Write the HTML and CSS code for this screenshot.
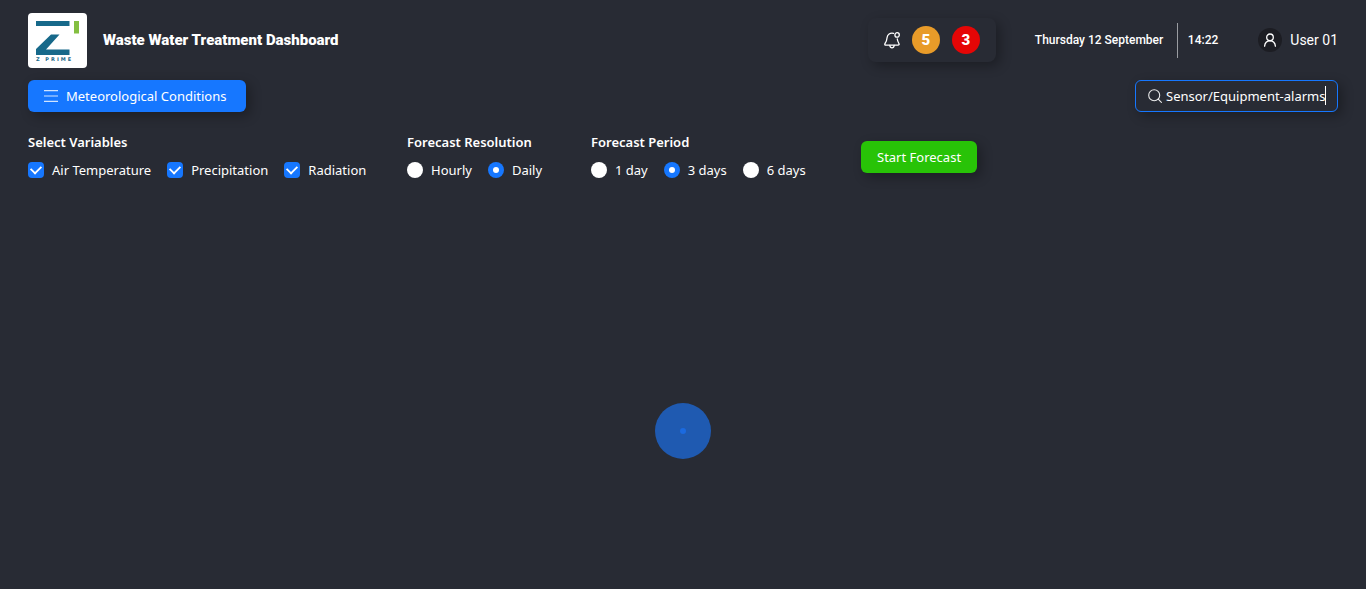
FILE: index.html
```html
<!DOCTYPE html>
<html lang="en">
<head>
<meta charset="utf-8">
<meta name="viewport" content="width=device-width, initial-scale=1">
<title>Waste Water Treatment Dashboard</title>
<link rel="stylesheet" href="styles.css">
</head>
<body>
<div class="page">
  <header class="header">
    <div class="brand">
      <div class="logo">
        <svg class="logo-mark" viewBox="0 0 44 34" aria-hidden="true">
          <path fill="#17698a" d="M0 0H33.500V5H0Z"/>
          <path fill="#17698a" d="M15 13.500H23.500L10 28.500H33.500V34H0V28Z"/>
          <path fill="#84bf41" d="M38 0H43V12.500H38Z"/>
        </svg>
        <span class="logo-name">Z PRIME</span>
      </div>
      <h1 class="title">Waste Water Treatment Dashboard</h1>
    </div>
    <div class="status">
      <div class="alerts">
        <svg class="bell" viewBox="0 0 16 17" fill="none" stroke="#fff" stroke-width="1.300" stroke-linecap="round" stroke-linejoin="round" aria-hidden="true">
          <path d="M9.600 1.300C6 .5 3.400 2.400 3.100 5.500C2.900 8 2.700 9.200 1 11.500C.5 12.400 .8 13.100 1.800 13.100H14C15 13.100 15.400 12.400 14.900 11.500C14 10 13.500 9 13.300 7"/>
          <path d="M5.800 13.300C6.200 16.600 9.800 16.600 10.200 13.300"/>
          <circle cx="13.100" cy="2.900" r="2.200"/>
        </svg>
        <span class="count count-warning">5</span>
        <span class="count count-critical">3</span>
      </div>
      <div class="clock">
        <span class="date">Thursday 12 September</span>
        <span class="time">14:22</span>
      </div>
      <div class="user">
        <span class="avatar">
          <svg viewBox="0 0 14 14" width="14" height="14" fill="none" stroke="#fff" stroke-width="1.300" stroke-linecap="round" aria-hidden="true">
            <circle cx="7" cy="4.300" r="3.300"/>
            <path d="M1.600 13.200C1.900 9.800 4 7.800 7 7.800S12.100 9.800 12.400 13.200"/>
          </svg>
        </span>
        <span class="user-name">User 01</span>
      </div>
    </div>
  </header>

  <div class="toolbar">
    <button class="button button-menu" type="button">
      <svg viewBox="0 0 14 12" width="14" height="12" stroke="#fff" stroke-opacity=".8" stroke-width="1.200" aria-hidden="true"><path d="M0 .6H14M0 6H14M0 11.400H14"/></svg>
      Meteorological Conditions
    </button>
    <label class="search">
      <svg viewBox="0 0 14 14" width="14" height="14" fill="none" stroke="#fff" stroke-opacity=".9" stroke-width="1.100" stroke-linecap="round" aria-hidden="true">
        <circle cx="6.200" cy="6.200" r="5.500"/><path d="M10.200 10.200L13.400 13.400"/>
      </svg>
      <input class="search-input" type="text" value="Sensor/Equipment-alarms" aria-label="Search">
      <span class="caret"></span>
    </label>
  </div>

  <form class="filters">
    <fieldset class="group group-variables">
      <legend class="group-title">Select Variables</legend>
      <div class="options">
        <label class="option"><input class="tick" type="checkbox" checked>Air Temperature</label>
        <label class="option"><input class="tick" type="checkbox" checked>Precipitation</label>
        <label class="option"><input class="tick" type="checkbox" checked>Radiation</label>
      </div>
    </fieldset>
    <fieldset class="group group-resolution">
      <legend class="group-title">Forecast Resolution</legend>
      <div class="options">
        <label class="option"><input class="dot" type="radio" name="resolution">Hourly</label>
        <label class="option"><input class="dot" type="radio" name="resolution" checked>Daily</label>
      </div>
    </fieldset>
    <fieldset class="group group-period">
      <legend class="group-title">Forecast Period</legend>
      <div class="options">
        <label class="option"><input class="dot" type="radio" name="period">1 day</label>
        <label class="option"><input class="dot" type="radio" name="period" checked>3 days</label>
        <label class="option"><input class="dot" type="radio" name="period">6 days</label>
      </div>
    </fieldset>
    <button class="button button-start" type="button">Start Forecast</button>
  </form>

  <main class="content">
    <div class="loader" role="status" aria-label="Loading"><span class="loader-core"></span></div>
  </main>
</div>
</body>
</html>
```
FILE: styles.css
```css
* { box-sizing: border-box; }

body {
  margin: 0;
  background: #282b34;
  color: #fff;
  font-family: "Noto Sans", "Open Sans", sans-serif;
  font-size: 13px;
  line-height: 20px;
}

.page {
  display: flex;
  flex-direction: column;
  min-height: 100vh;
  padding: 13px 28px 0;
}

.header, .toolbar {
  display: flex;
  align-items: center;
  justify-content: space-between;
}

.header {
  margin-bottom: 12px;
  font-family: Roboto, sans-serif;
}

.brand { display: flex; align-items: center; gap: 16px; }

.logo {
  width: 59px;
  height: 55px;
  padding: 8px 7px 0 8px;
  border-radius: 4px;
  background: #fff;
}

.logo-mark { display: block; width: 44px; height: 34px; }

.logo-name {
  display: block;
  color: #17698a;
  font-family: "DejaVu Sans", sans-serif;
  font-size: 5px;
  font-weight: 700;
  line-height: 8px;
  letter-spacing: 2px;
  white-space: nowrap;
}

.title {
  margin: 0;
  padding-bottom: 2px;
  font-size: 15px;
  font-weight: 900;
  line-height: 20px;
}

.status { display: flex; align-items: center; padding-bottom: 1px; }

.alerts {
  display: flex;
  align-items: center;
  gap: 12px;
  padding: 8px 16px;
  margin-right: 39px;
  border-radius: 8px;
  box-shadow: 4px 4px 12px rgba(0, 0, 0, .3);
}

.bell { width: 16px; height: 17px; }

.count {
  width: 28px;
  border-radius: 50%;
  font-size: 15px;
  font-weight: 900;
  line-height: 28px;
  text-align: center;
}

.count-warning { background: #e89b29; }
.count-critical { background: #e50606; }

.clock {
  display: flex;
  margin-right: 40px;
  font-size: 12px;
  font-weight: 500;
  line-height: 35px;
}

.date { width: 143px; border-right: 1px solid #9a9ca1; }
.time { padding-left: 10px; }

.user { display: flex; align-items: center; gap: 8px; }

.avatar {
  display: grid;
  place-items: center;
  width: 24px;
  height: 24px;
  border-radius: 50%;
  background: #1c1d23;
}

.user-name { font-size: 14px; }

.button {
  display: flex;
  align-items: center;
  justify-content: center;
  height: 32px;
  padding: 0 16px;
  border: 0;
  border-radius: 6px;
  box-shadow: 4px 4px 12px rgba(0, 0, 0, .3);
  color: #fff;
  font: inherit;
  white-space: nowrap;
}

.button-menu {
  gap: 8px;
  justify-content: flex-start;
  min-width: 218px;
  background: #1677ff;
}

.button-start { margin-top: 9px; background: #28c307; }

.search {
  position: relative;
  display: flex;
  align-items: center;
  gap: 4px;
  width: 203px;
  height: 32px;
  padding: 0 11px 0 12px;
  border: 1px solid #1677ff;
  border-radius: 6px;
  box-shadow: 4px 4px 12px rgba(0, 0, 0, .3);
}

.search svg { flex: none; }

.search-input {
  flex: 1;
  min-width: 0;
  padding: 0;
  border: 0;
  outline: 0;
  background: none;
  color: #fff;
  font: inherit;
}

.caret {
  position: absolute;
  top: 5px;
  right: 11px;
  width: 1px;
  height: 19px;
  background: #fff;
}

.filters {
  display: flex;
  align-items: flex-start;
  margin-top: 20px;
}

.group { min-width: 0; margin: 0; padding: 0; border: 0; }

.group-title {
  padding: 0;
  font-weight: 600;
}

.options { display: flex; gap: 16px; margin-top: 8px; }

.option { display: flex; align-items: center; gap: 8px; white-space: nowrap; }

.tick, .dot {
  appearance: none;
  display: grid;
  place-items: center;
  width: 16px;
  height: 16px;
  margin: 0;
  background: #fff;
}

.tick { border-radius: 4px; }
.dot { border-radius: 50%; }

.tick:checked, .dot:checked { background: #1677ff; }

.tick:checked::after {
  content: "";
  width: 6px;
  height: 9px;
  margin-bottom: 3px;
  border: solid #fff;
  border-width: 0 2px 2px 0;
  transform: rotate(45deg) scale(.9);
}

.dot:checked::after {
  content: "";
  width: 6px;
  height: 6px;
  border-radius: 50%;
  background: #fff;
}

.group-variables { width: 379px; }
.group-resolution { width: 184px; }
.group-period { width: 270px; }

.content {
  display: grid;
  flex: 1;
  place-items: center;
  padding-top: 92px;
}

.loader {
  display: grid;
  place-items: center;
  width: 56px;
  height: 56px;
  border-radius: 50%;
  background: #1f5ab1;
}

.loader-core {
  width: 6px;
  height: 6px;
  border-radius: 50%;
  background: #1b6ae0;
}
```
